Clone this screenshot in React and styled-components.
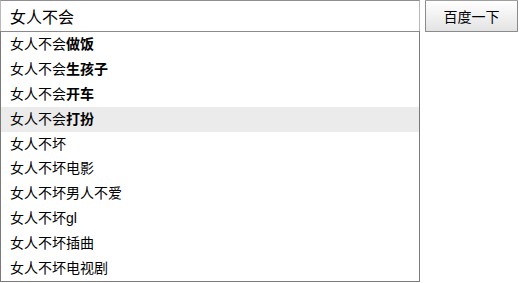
import React from 'react';
import styled, { createGlobalStyle } from 'styled-components';

const GlobalStyle = createGlobalStyle`
  html, body {
    margin: 0;
    padding: 0;
    background: #fff;
  }
  body {
    font-family: "Liberation Sans", "Noto Sans CJK SC", sans-serif;
    color: #000;
  }
`;

const Page = styled.div`
  display: flex;
  align-items: flex-start;
  gap: 5px;
  width: 522px;
  height: 283px;
`;

const SearchBox = styled.div`
  width: 420px;
  display: flex;
  flex-direction: column;
`;

const Input = styled.div`
  box-sizing: border-box;
  height: 31px;
  border: 1px solid #b8b8b8;
  border-top-color: #8e8e8e;
  border-bottom: none;
  padding: 0 9px;
  display: flex;
  align-items: center;
  font-size: 16px;
`;

const Dropdown = styled.ul`
  list-style: none;
  margin: 0;
  padding: 0;
  box-sizing: border-box;
  border: 1px solid #7a7a7a;
  border-top-color: #8a8a8a;
`;

const Item = styled.li`
  height: 24.9px;
  line-height: 25px;
  padding: 0 9px;
  font-size: 14px;
  background: ${({ $active }) => ($active ? '#ebebeb' : 'transparent')};

  b {
    font-weight: bold;
  }
`;

const Button = styled.button`
  box-sizing: border-box;
  width: 93px;
  height: 32px;
  margin: 0;
  padding: 0;
  border: 1px solid #8b8b8b;
  border-top-color: #a0a0a0;
  border-radius: 1px;
  background: linear-gradient(#ffffff, #e3e3e3);
  font-family: "Liberation Sans", "Noto Sans CJK SC", sans-serif;
  font-size: 14px;
  color: #000;
`;

const suggestions = [
  { base: '女人不会', bold: '做饭' },
  { base: '女人不会', bold: '生孩子' },
  { base: '女人不会', bold: '开车' },
  { base: '女人不会', bold: '打扮', active: true },
  { base: '女人不坏' },
  { base: '女人不坏电影' },
  { base: '女人不坏男人不爱' },
  { base: '女人不坏gl' },
  { base: '女人不坏插曲' },
  { base: '女人不坏电视剧' },
];

const App = () => (
  <>
    <GlobalStyle />
    <Page>
      <SearchBox>
        <Input>女人不会</Input>
        <Dropdown>
          {suggestions.map((s, i) => (
            <Item key={i} $active={s.active}>
              {s.base}
              {s.bold && <b>{s.bold}</b>}
            </Item>
          ))}
        </Dropdown>
      </SearchBox>
      <Button>百度一下</Button>
    </Page>
  </>
);

export default App;
